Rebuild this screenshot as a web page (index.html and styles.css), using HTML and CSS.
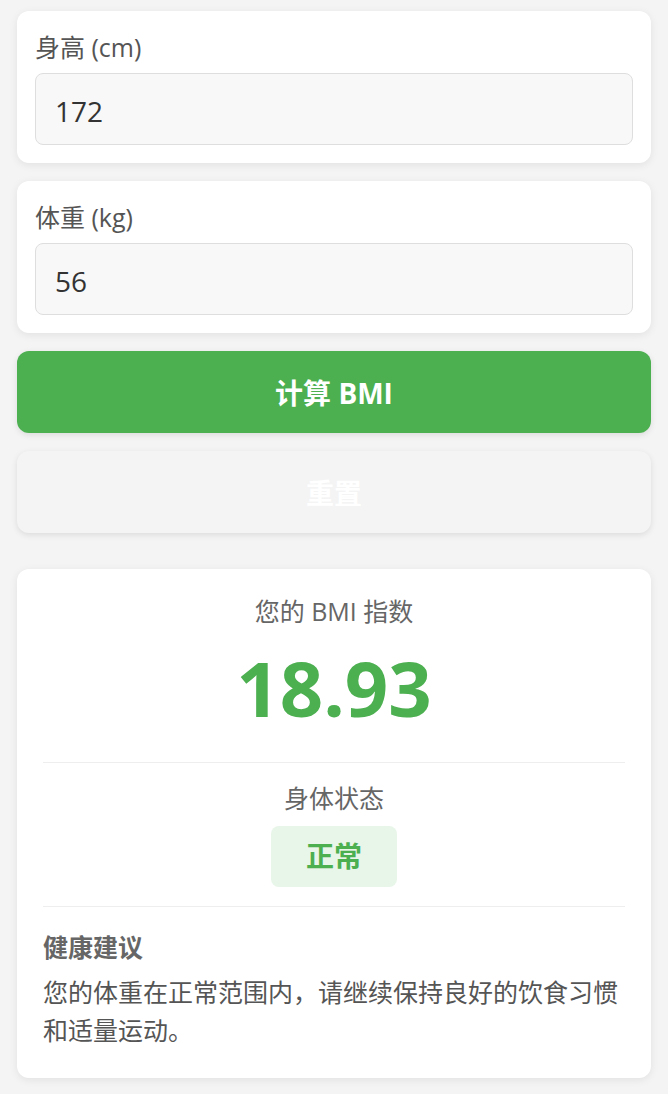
FILE: index.html
```html
<!DOCTYPE html>
<html lang="zh-CN">
<head>
<meta charset="utf-8">
<title>BMI 计算器</title>
<link rel="stylesheet" href="styles.css">
</head>
<body>
<main class="page">
  <section class="card field">
    <label class="field-label" for="h">身高 (cm)</label>
    <input class="field-input" id="h" type="text" value="172">
  </section>
  <section class="card field">
    <label class="field-label" for="w">体重 (kg)</label>
    <input class="field-input" id="w" type="text" value="56">
  </section>
  <button class="btn btn-primary" type="button">计算 BMI</button>
  <button class="btn btn-reset" type="button">重置</button>

  <section class="card result">
    <div class="result-top">
      <div class="result-label">您的 BMI 指数</div>
      <div class="result-value">18.93</div>
    </div>
    <div class="result-status">
      <div class="result-label">身体状态</div>
      <div class="badge">正常</div>
    </div>
    <div class="advice">
      <div class="advice-title">健康建议</div>
      <p class="advice-text">您的体重在正常范围内，请继续保持良好的饮食习惯和适量运动。</p>
    </div>
  </section>
</main>
</body>
</html>
```

FILE: styles.css
```css
html, body {
  margin: 0;
  padding: 0;
}
body {
  background: #f4f4f4;
  font-family: "Open Sans", "Noto Sans CJK SC", sans-serif;
  color: #333;
}
.page {
  padding: 11px 17px 16px;
  display: flex;
  flex-direction: column;
  gap: 18px;
}
.card {
  background: #fff;
  border-radius: 12px;
  box-shadow: 0 2px 8px rgba(0, 0, 0, 0.08);
}
.field {
  padding: 18px;
  display: flex;
  flex-direction: column;
}
.field-label {
  font-size: 25px;
  line-height: 37px;
  color: #555;
  margin-bottom: 7px;
}
.field-input {
  box-sizing: border-box;
  height: 72px;
  width: 100%;
  border: 1.5px solid #dedede;
  border-radius: 8px;
  background: #f8f8f8;
  padding: 3px 19px 0;
  font-family: inherit;
  font-size: 28px;
  color: #333;
  outline: none;
}
.btn {
  height: 82px;
  border: none;
  border-radius: 12px;
  font-family: inherit;
  font-size: 28px;
  font-weight: 700;
  color: #fff;
  box-shadow: 0 2px 6px rgba(0, 0, 0, 0.1);
}
.btn-primary {
  background: #4caf50;
}
.btn-reset {
  background: #f4f4f4;
  margin-bottom: 18px;
}
.result {
  padding: 24px 26px 29px;
  display: flex;
  flex-direction: column;
}
.result-top {
  display: flex;
  flex-direction: column;
  align-items: center;
  padding-bottom: 29px;
  border-bottom: 1.5px solid #eee;
}
.result-label {
  font-size: 25px;
  line-height: 37px;
  color: #666;
}
.result-value {
  font-size: 76px;
  font-weight: 700;
  line-height: 90px;
  margin-top: 13px;
  color: #4caf50;
}
.result-status {
  display: flex;
  flex-direction: column;
  align-items: center;
  padding: 17px 0 19px;
  border-bottom: 1.5px solid #eee;
}
.badge {
  margin-top: 9px;
  background: #e8f5e9;
  color: #4caf50;
  font-size: 28px;
  font-weight: 700;
  line-height: 43px;
  padding: 9px 35px;
  border-radius: 8px;
}
.advice {
  padding-top: 22px;
}
.advice-title {
  font-size: 25px;
  line-height: 37px;
  font-weight: 700;
  color: #666;
  margin-bottom: 8px;
}
.advice-text {
  margin: 0;
  font-size: 25px;
  line-height: 37.5px;
  color: #555;
}
```
